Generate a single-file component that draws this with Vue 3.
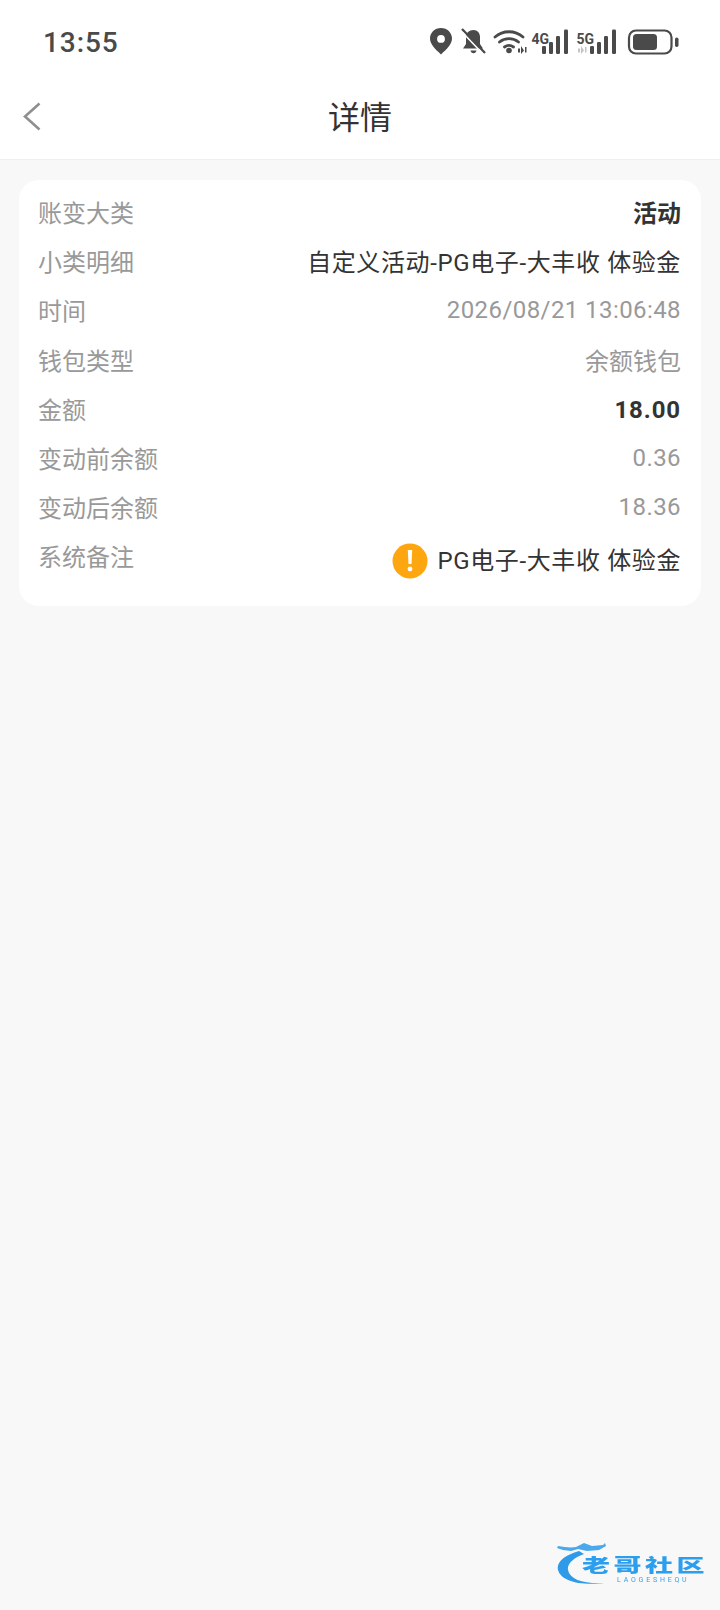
<script setup>
const rows = [
  { label: '账变大类', value: '活动', cls: 'strong' },
  { label: '小类明细', value: '自定义活动-PG电子-大丰收 体验金', cls: 'dark wide-text' },
  { label: '时间', value: '2026/08/21 13:06:48', cls: 'muted wide' },
  { label: '钱包类型', value: '余额钱包', cls: 'muted' },
  { label: '金额', value: '18.00', cls: 'strong wider' },
  { label: '变动前余额', value: '0.36', cls: 'muted wide' },
  { label: '变动后余额', value: '18.36', cls: 'muted wide' }
]
</script>

<template>
  <div class="page">
    <div class="status">
      <span class="clock">13:55</span>
      <svg class="status-icons" width="250" height="34" viewBox="0 0 250 34">
        <g fill="#4a4a4a">
          <path fill-rule="evenodd" d="M11 4c6.300 0 11 4.700 11 10.600 0 5.600-5 10.400-11 15.900C5 25 0 20.200 0 14.600 0 8.700 4.700 4 11 4zm0 7a3.900 3.900 0 1 0 0 7.800 3.900 3.900 0 0 0 0-7.800z"/>
          <path d="M43.500 6c4 0 6.500 3 6.500 7v7l3 4.500H33l3-4.500v-7c0-4 3-7 7.500-7zM40.500 26.500h6c-.4 1.800-1.500 2.800-3 2.800s-2.600-1-3-2.800z"/>
          <path d="M32 5 55 29" fill="none" stroke="#4a4a4a" stroke-width="2.400"/>
          <path d="M32 8 53 30" fill="none" stroke="#fff" stroke-width="1.600"/>
          <g fill="none" stroke="#4a4a4a" stroke-width="2.800" stroke-linecap="round">
            <path d="M65 13c8-7 20-7 28 0"/>
            <path d="M69.500 18c5.500-4.500 13.500-4.500 19 0"/>
            <path d="M74.500 23c2.800-2 6.200-2 9 0"/>
          </g>
          <circle cx="79" cy="26.500" r="2.800"/>
          <path d="M88 24.500h2v4h-2zM91 22l3 4.500-3 3.500zM95 23h1.500v5.500H95z"/>
          <text x="101.500" y="20" class="net">4G</text>
          <rect x="112" y="22" width="4" height="8" rx="1.300"/>
          <rect x="119" y="18" width="4" height="12" rx="1.300"/>
          <rect x="126" y="12" width="4" height="18" rx="1.300"/>
          <rect x="134" y="5.500" width="4" height="24.500" rx="1.300"/>
          <text x="146.500" y="20" class="net">5G</text>
          <path fill="#c4c4c4" d="M148 24.500h2v4h-2zM151 22l3 4.500-3 3.500zM155 23h1.500v5.500H155z"/>
          <rect x="160" y="22" width="4" height="8" rx="1.300"/>
          <rect x="167" y="18" width="4" height="12" rx="1.300"/>
          <rect x="174" y="12" width="4" height="18" rx="1.300"/>
          <rect x="182" y="5.500" width="4" height="24.500" rx="1.300"/>
          <rect x="199" y="6.500" width="42.500" height="23" rx="7" fill="none" stroke="#4a4a4a" stroke-width="2.200"/>
          <rect x="203" y="10" width="24" height="16" rx="3.500"/>
          <rect x="245" y="13.500" width="3.500" height="9.500" rx="1.700"/>
        </g>
      </svg>
    </div>

    <header class="nav">
      <svg class="back" width="20" height="30" viewBox="0 0 20 30">
        <path d="M17.500 2.500 3 15.500l14.500 13" fill="none" stroke="#8f8f8f" stroke-width="2.600"/>
      </svg>
      <h1 class="title">详情</h1>
    </header>

    <section class="card">
      <div v-for="row in rows" :key="row.label" class="row">
        <span class="label">{{ row.label }}</span>
        <span class="value" :class="row.cls">{{ row.value }}</span>
      </div>
      <div class="row note">
        <span class="label">系统备注</span>
        <span class="value dark wide-text note-value">
          <svg width="36" height="36" viewBox="0 0 36 36">
            <circle cx="18" cy="18" r="17.500" fill="#fea60f"/>
            <path d="M15.800 7h4.400l-.7 14h-3z" fill="#fff"/>
            <circle cx="18" cy="26" r="2.400" fill="#fff"/>
          </svg>
          PG电子-大丰收 体验金
        </span>
      </div>
    </section>

    <div class="mark">
      <svg class="dragon" width="78" height="50" viewBox="0 0 78 50">
        <path d="M24 11C10 15 1 22 3 30c3 11 22 16 46 13-20 1-34-3-36-13-1-6 5-12 16-16z" fill="#2f9be8"/>
        <path d="M3 6c7 1 12 2 18 1l8-4 8 3 11-1 2-2 1 3-7 4-12 1-9-2-7 2-8-1-6-2z" fill="#4aa8ec"/>
      </svg>
      <span class="mark-cn">老哥社区</span>
      <span class="mark-en">LAOGESHEQU</span>
    </div>
  </div>
</template>

<style scoped>
.page {
  position: relative;
  width: 720px;
  height: 1610px;
  overflow: hidden;
  background: #f8f8f8;
  font-family: "Roboto", "Noto Sans CJK SC", sans-serif;
}
.status {
  height: 76px;
  background: #fff;
  display: flex;
  align-items: flex-start;
  justify-content: space-between;
  padding: 0 40px 0 43px;
}
.clock {
  margin-top: 26px;
  font-size: 28px;
  line-height: 34px;
  font-weight: 500;
  letter-spacing: 0.900px;
  color: #4a4a4a;
}
.status-icons {
  margin-top: 24px;
}
.net {
  font-family: "Roboto", sans-serif;
  font-size: 14px;
  font-weight: 700;
}
.nav {
  position: relative;
  height: 83px;
  background: #fff;
  border-bottom: 1px solid #f0f0f0;
  display: flex;
  align-items: center;
  justify-content: center;
}
.back {
  position: absolute;
  left: 22px;
  top: 25px;
}
.title {
  margin: 0;
  font-size: 32px;
  line-height: 76px;
  font-weight: 400;
  color: #333;
}
.card {
  margin: 20px 19px 0;
  padding: 7px 20px 18px 19px;
  background: #fff;
  border-radius: 20px;
}
.row {
  height: 49.200px;
  display: flex;
  align-items: center;
  justify-content: space-between;
  font-size: 24px;
}
.label {
  color: #999;
}
.value.muted {
  color: #999;
}
.value.dark {
  color: #333;
}
.value.strong {
  color: #333;
  font-weight: 700;
}
.value.wide {
  letter-spacing: 0.420px;
  padding-top: 1px;
}
.value.wide-text {
  letter-spacing: 0.620px;
}
.value.wider {
  letter-spacing: 0.900px;
  padding-top: 3px;
}
.note {
  height: 54px;
  margin-top: 3px;
  align-items: flex-start;
}
.note .label {
  line-height: 48px;
}
.note-value {
  display: flex;
  align-items: center;
  gap: 9px;
  line-height: 54px;
}
.mark {
  position: absolute;
  left: 555px;
  top: 1540px;
  width: 160px;
  height: 60px;
  filter: blur(0.400px);
}
.dragon {
  position: absolute;
  left: 0;
  top: 0;
}
.mark-cn {
  position: absolute;
  left: 27px;
  top: 10px;
  font-size: 28px;
  line-height: 32px;
  font-weight: 900;
  letter-spacing: 3.500px;
  white-space: nowrap;
  color: #2c9eee;
  transform: scaleY(0.640);
  transform-origin: 0 50%;
}
.mark-en {
  position: absolute;
  left: 62px;
  top: 37px;
  font-size: 7px;
  line-height: 7px;
  letter-spacing: 2.800px;
  white-space: nowrap;
  color: #3a9fe8;
}
</style>
